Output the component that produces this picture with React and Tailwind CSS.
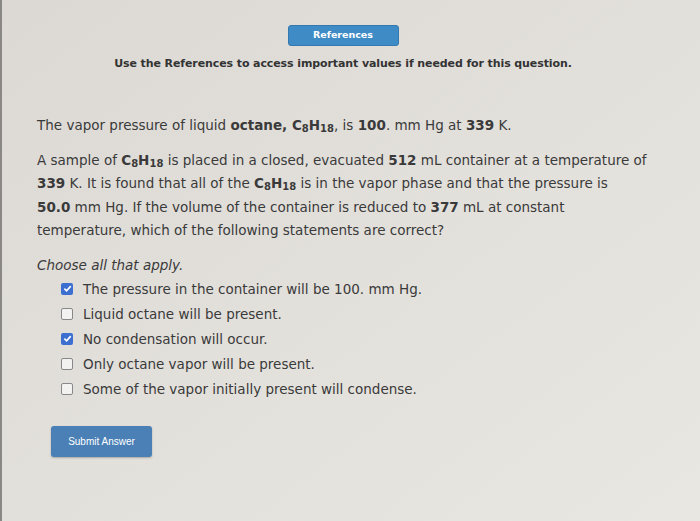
export default function App() {
  const opts = [
    ["The pressure in the container will be 100. mm Hg.", true],
    ["Liquid octane will be present.", false],
    ["No condensation will occur.", true],
    ["Only octane vapor will be present.", false],
    ["Some of the vapor initially present will condense.", false],
  ];
  const F = { fontFamily: '"DejaVu Sans", Verdana, sans-serif' };
  const Sub = ({ children }) => (
    <span className="text-[10px] relative top-[2px] leading-none">{children}</span>
  );
  return (
    <div
      className="w-[700px] h-[521px] overflow-hidden bg-gradient-to-br from-[#dcd9d5] to-[#e9e7e1] border-l-2 border-[#8a8884] text-[#3a3a3a]"
      style={F}
    >
      <div className="flex flex-col items-center pt-[25px] pr-[16px]">
        <div className="w-[111px] h-[21px] rounded-[3px] bg-[#3f8bc6] border border-[#3478b0] flex items-center justify-center text-white text-[9.5px] font-bold">
          References
        </div>
        <div className="mt-[10px] text-[11px] font-bold text-[#333] tracking-[-0.1px]">
          Use the References to access important values if needed for this question.
        </div>
      </div>
      <div className="pl-[35px]">
        <p className="mt-[42px] text-[13.5px] leading-[20px]">
          The vapor pressure of liquid <b>octane, C<Sub>8</Sub>H<Sub>18</Sub></b>, is <b>100</b>. mm Hg at <b>339</b> K.
        </p>
        <p className="mt-[14px] text-[13.5px] leading-[23.5px]">
          A sample of <b>C<Sub>8</Sub>H<Sub>18</Sub></b> is placed in a closed, evacuated <b>512</b> mL container at a temperature of
          <br />
          <b>339</b> K. It is found that all of the <b>C<Sub>8</Sub>H<Sub>18</Sub></b> is in the vapor phase and that the pressure is
          <br />
          <b>50.0</b> mm Hg. If the volume of the container is reduced to <b>377</b> mL at constant
          <br />
          temperature, which of the following statements are correct?
        </p>
        <p className="mt-[12px] text-[13.5px] italic">Choose all that apply.</p>
        <div className="mt-[5px] flex flex-col gap-[7px] pl-[24px]">
          {opts.map(([t, c]) => (
            <div key={t} className="flex items-center gap-[10px] text-[13.5px] h-[18px]">
              {c ? (
                <span className="w-[12px] h-[12px] rounded-[2px] bg-[#3d6fd0] flex items-center justify-center">
                  <svg width="9" height="9" viewBox="0 0 10 10"><path d="M1.5 5.2 L4 7.6 L8.6 2.4" stroke="white" strokeWidth="1.8" fill="none" /></svg>
                </span>
              ) : (
                <span className="w-[12px] h-[12px] rounded-[2px] border border-[#888] bg-[#f2f2f0]"></span>
              )}
              <span>{t}</span>
            </div>
          ))}
        </div>
        <div className="mt-[28px] ml-[14px] w-[101px] h-[31px] rounded-[3px] bg-[#4a80b6] flex items-center justify-center text-white text-[10px] shadow-[0_1px_2px_rgba(0,0,0,0.25)]" style={{ fontFamily: '"Liberation Sans", Arial, sans-serif' }}>
          Submit Answer
        </div>
      </div>
    </div>
  );
}
